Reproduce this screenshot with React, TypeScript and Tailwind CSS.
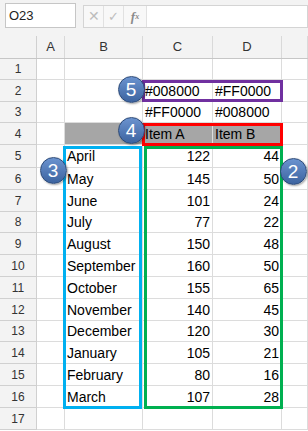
import React from "react";

const cols = [
  { key: "A", w: 28 },
  { key: "B", w: 78 },
  { key: "C", w: 70 },
  { key: "D", w: 69 },
  { key: "", w: 26 },
];

const heights = [21, 22, 21, 22, 23, 22, 22, 21, 22, 22, 22, 22, 21, 22, 22, 22, 22];

const months: [string, number, number][] = [
  ["April", 122, 44],
  ["May", 145, 50],
  ["June", 101, 24],
  ["July", 77, 22],
  ["August", 150, 48],
  ["September", 160, 50],
  ["October", 155, 65],
  ["November", 140, 45],
  ["December", 120, 30],
  ["January", 105, 21],
  ["February", 80, 16],
  ["March", 107, 28],
];

function cellsFor(row: number): { text?: string; align?: "l" | "r"; gray?: boolean }[] {
  const empty = [{}, {}, {}, {}, {}];
  if (row === 2) return [{}, {}, { text: "#008000" }, { text: "#FF0000" }, {}];
  if (row === 3) return [{}, {}, { text: "#FF0000" }, { text: "#008000" }, {}];
  if (row === 4)
    return [{}, { gray: true }, { text: "Item A", gray: true }, { text: "Item B", gray: true }, {}];
  if (row >= 5 && row <= 16) {
    const [m, a, b] = months[row - 5];
    return [{}, { text: m }, { text: String(a), align: "r" }, { text: String(b), align: "r" }, {}];
  }
  return empty;
}

function Badge({ n, x, y }: { n: number; x: number; y: number }) {
  return (
    <div
      className="absolute flex h-[27px] w-[27px] items-center justify-center rounded-full border border-[#2c4a78] bg-gradient-to-b from-[#6b93cf] to-[#3d64a0] text-[19px] leading-none text-white shadow-[1px_1px_2px_rgba(0,0,0,0.35)]"
      style={{ left: x - 13.5, top: y - 13.5 }}
    >
      {n}
    </div>
  );
}

export default function App() {
  return (
    <div className="relative h-[431px] w-[308px] overflow-hidden bg-white font-['Liberation_Sans',Arial,sans-serif] text-[14px] text-black">
      {/* formula bar */}
      <div className="flex h-[36px] items-start gap-[7px] bg-[#f3f3f3] pl-[5px] pt-[3px]">
        <div className="flex h-[25px] w-[71px] items-center border border-[#c6c6c6] bg-white pl-[3px] text-[13px] text-[#222]">
          O23
        </div>
        <div className="mt-[2px] flex h-[23px] flex-1 border border-[#d4d4d4] bg-white">
          <div className="flex w-[20px] items-center justify-center border-r border-[#e1e1e1] bg-[#f8f8f8] text-[14px] text-[#bdbdbd]">
            ✕
          </div>
          <div className="flex w-[20px] items-center justify-center border-r border-[#e1e1e1] bg-[#f8f8f8] text-[13px] text-[#bdbdbd]">
            ✓
          </div>
          <div className="flex w-[23px] items-center justify-center border-r border-[#e1e1e1] bg-[#f8f8f8] font-['Liberation_Serif',serif] text-[13px] font-bold italic text-[#8a8a8a]">
            f<span className="text-[8px]">x</span>
          </div>
          <div className="flex-1 bg-white" />
        </div>
      </div>

      {/* column headers */}
      <div className="flex h-[23px] border-b border-[#c6c6c6] bg-[#f3f3f3]">
        <div className="w-[37px] border-r border-[#d0d0d0]" />
        {cols.map((c, i) => (
          <div
            key={i}
            className="flex items-center justify-center border-r border-[#d9d9d9] text-[13px] text-[#333]"
            style={{ width: c.w }}
          >
            {c.key}
          </div>
        ))}
      </div>

      {/* rows */}
      {heights.map((h, r) => {
        const row = r + 1;
        const cells = cellsFor(row);
        return (
          <div key={row} className="flex" style={{ height: h }}>
            <div className="flex w-[37px] items-center justify-center border-r border-b border-[#d0d0d0] bg-[#f3f3f3] text-[12px] text-[#333]">
              {row}
            </div>
            {cells.map((c, i) => (
              <div
                key={i}
                className={`flex items-center overflow-visible whitespace-nowrap border-r border-b border-[#dcdcdc] px-[2px] pt-[1px] ${
                  c.align === "r" ? "justify-end" : "justify-start"
                } ${c.gray ? "bg-[#a6a6a6]" : ""}`}
                style={{ width: cols[i].w }}
              >
                {c.text}
              </div>
            ))}
          </div>
        );
      })}

      {/* highlight boxes */}
      <div className="absolute left-[142px] top-[80px] h-[22px] w-[141px] border-[3px] border-[#7030a0]" />
      <div className="absolute left-[142px] top-[123px] h-[23px] w-[141px] border-[3px] border-[#ff0000]" />
      <div className="absolute left-[63px] top-[146px] h-[263px] w-[79px] border-[3px] border-[#00b0f0]" />
      <div className="absolute left-[144px] top-[146px] h-[263px] w-[139px] border-[3px] border-[#00b050]" />

      <Badge n={5} x={131} y={89} />
      <Badge n={4} x={131} y={130} />
      <Badge n={3} x={53} y={170} />
      <Badge n={2} x={293} y={171} />
    </div>
  );
}
